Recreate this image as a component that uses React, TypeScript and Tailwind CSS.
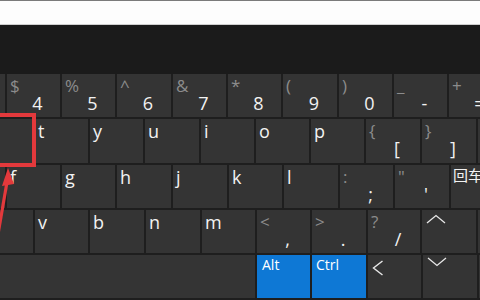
import React from "react";

type K = {
  w: number;
  top?: string;
  main?: string;
  letter?: string;
  blue?: boolean;
  icon?: "up" | "down" | "left";
};

const Chevron = ({ kind }: { kind: "up" | "down" | "left" }) => {
  if (kind === "left") {
    return (
      <svg width="12" height="16" viewBox="0 0 12 16" className="ml-[4px] mt-[5px]">
        <polyline points="10.5,1 1.5,8 10.5,15" fill="none" stroke="#e8e8e8" strokeWidth="1.4" />
      </svg>
    );
  }
  return (
    <svg
      width="20"
      height="10"
      viewBox="0 0 20 10"
      className={kind === "up" ? "ml-[4px] mt-[4px]" : "ml-[4px] mt-[2px]"}
    >
      <polyline
        points={kind === "up" ? "1,9 10,1.5 19,9" : "1,1 10,8.5 19,1"}
        fill="none"
        stroke="#e8e8e8"
        strokeWidth="1.3"
      />
    </svg>
  );
};

const Key = ({ k, h }: { k: K; h: number }) => {
  const bg = k.blue ? "bg-[#0e78d5]" : "bg-[#343434]";
  return (
    <div className={`shrink-0 ${bg} flex flex-col`} style={{ width: k.w, height: h }}>
      {k.letter && (
        <span className="pl-[3px] pt-[3px] text-[18px] leading-none text-[#f2f2f2]">{k.letter}</span>
      )}
      {k.top !== undefined && (
        <>
          <span className="pl-[3px] pt-[3px] h-[20px] text-[17px] leading-none text-[#8c8c8c]">{k.top}</span>
          <span className="flex justify-center pl-[8px] text-[18px] leading-none text-[#f2f2f2]">{k.main}</span>
        </>
      )}
      {k.icon && <Chevron kind={k.icon} />}
    </div>
  );
};

const Row = ({ keys, h }: { keys: K[]; h: number }) => (
  <div className="flex gap-[2px]">
    {keys.map((k, i) => (
      <Key key={i} k={k} h={h} />
    ))}
  </div>
);

const row1: K[] = [
  { w: 5 },
  { w: 53, top: "$", main: "4" },
  { w: 53, top: "%", main: "5" },
  { w: 54, top: "^", main: "6" },
  { w: 53, top: "&", main: "7" },
  { w: 53, top: "*", main: "8" },
  { w: 54, top: "(", main: "9" },
  { w: 53, top: ")", main: "0" },
  { w: 53, top: "_", main: "-" },
  { w: 53, top: "+", main: "=" },
];

const row2: K[] = [
  { w: 33 },
  { w: 53, letter: "t" },
  { w: 53, letter: "y" },
  { w: 54, letter: "u" },
  { w: 53, letter: "i" },
  { w: 53, letter: "o" },
  { w: 53, letter: "p" },
  { w: 54, top: "{", main: "[" },
  { w: 54, top: "}", main: "]" },
  { w: 60 },
];

const row3: K[] = [
  { w: 5 },
  { w: 53, letter: "f" },
  { w: 53, letter: "g" },
  { w: 54, letter: "h" },
  { w: 54, letter: "j" },
  { w: 53, letter: "k" },
  { w: 54, letter: "l" },
  { w: 53, top: ":", main: ";" },
  { w: 54, top: "\"", main: "'" },
  { w: 60 },
];

const row4: K[] = [
  { w: 33 },
  { w: 53, letter: "v" },
  { w: 54, letter: "b" },
  { w: 54, letter: "n" },
  { w: 53, letter: "m" },
  { w: 53, top: "<", main: "," },
  { w: 54, top: ">", main: "." },
  { w: 52, top: "?", main: "/" },
  { w: 54, icon: "up" },
  { w: 60 },
];

export default function App() {
  return (
    <div
      className="relative w-[480px] h-[300px] overflow-hidden bg-[#1e1e1e]"
      style={{ fontFamily: '"Open Sans", "Noto Sans CJK SC", sans-serif' }}
    >
      <div className="h-[1px] bg-[#7b7b7b]" />
      <div className="h-[23px] bg-[#fdfdfd]" />
      <div className="h-[1px] bg-[#cfcfcf]" />
      <div className="h-[49px] bg-[#1b1b1b]" />
      <div className="flex flex-col gap-[2px]">
        <Row keys={row1} h={43} />
        <Row keys={row2} h={44} />
        <div className="flex gap-[2px]">
          {row3.slice(0, 9).map((k, i) => (
            <Key key={i} k={k} h={43} />
          ))}
          <div className="shrink-0 w-[60px] h-[43px] bg-[#343434] pl-[2px] pt-[3px] text-[15px] leading-none text-[#f2f2f2]">
            回车
          </div>
        </div>
        <Row keys={row4} h={43} />
        <div className="flex gap-[2px] h-[43px]">
          <div className="shrink-0 w-[255px] bg-[#343434]" />
          <div className="shrink-0 w-[53px] bg-[#0e78d5] pl-[5px] pt-[3px] text-[14px] leading-none text-white">Alt</div>
          <div className="shrink-0 w-[54px] bg-[#0e78d5] pl-[4px] pt-[3px] text-[14px] leading-none text-white">Ctrl</div>
          <div className="shrink-0 w-[53px] bg-[#343434]">
            <Chevron kind="left" />
          </div>
          <div className="shrink-0 w-[54px] bg-[#343434]">
            <Chevron kind="down" />
          </div>
          <div className="shrink-0 w-[60px] bg-[#343434]" />
        </div>
      </div>

      <div className="absolute left-[-4px] top-[113px] w-[40px] h-[54px] border-4 border-[#e3393c]" />
      <svg className="absolute left-0 top-[164px]" width="20" height="80" viewBox="0 0 20 80">
        <polygon points="8,4 14,20 2,22" fill="#e3393c" />
        <line x1="7" y1="18" x2="-3" y2="76" stroke="#e3393c" strokeWidth="3.2" />
      </svg>
    </div>
  );
}
